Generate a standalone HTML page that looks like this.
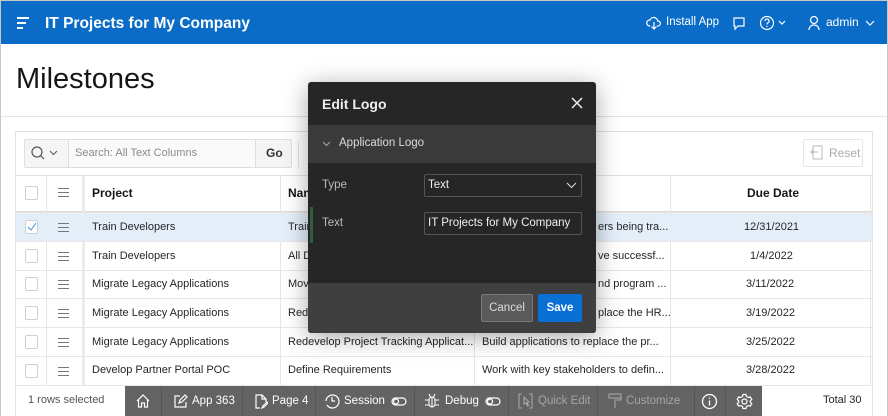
<!DOCTYPE html>
<html><head><meta charset="utf-8"><style>
*{box-sizing:border-box;margin:0;padding:0}
body{width:888px;height:416px;overflow:hidden;font-family:"Liberation Sans",sans-serif;background:#fff;position:relative;color:#262626}
.abs{position:absolute}
.hdr{left:0;top:0;width:888px;height:44px;background:#0a6cc7;color:#fff;border:1px solid #c8c8c8;border-bottom:none}
.t{position:absolute;white-space:nowrap}
.cell{position:absolute;font-size:11px;color:#262626;white-space:nowrap}
.cb{position:absolute;width:13px;height:14px;border:1px solid #cfcfcf;border-radius:2px;background:#fff;left:25px}
.hm{position:absolute;left:58px;width:11px;height:9px;border-top:1.5px solid #777;border-bottom:1.5px solid #777}
.hm:after{content:"";position:absolute;left:0;right:0;top:2.5px;border-top:1.5px solid #777}
.tb{position:absolute;top:386px;height:30px;color:#fff;font-size:11.5px;line-height:30px;border-left:1px solid #555}
</style></head><body>
<div class="abs hdr">
  <div class="abs" style="left:16px;top:16px;width:12px;height:2px;background:#fff"></div>
  <div class="abs" style="left:16px;top:21px;width:9px;height:2px;background:#fff"></div>
  <div class="abs" style="left:16px;top:26px;width:6px;height:2px;background:#fff"></div>
  <div class="t" style="left:44px;top:14px;font-size:15.5px;font-weight:bold">IT Projects for My Company</div>
  <svg class="abs" style="left:645px;top:14px" width="16" height="16" viewBox="0 0 16 16" fill="none" stroke="#fff" stroke-width="1.2"><path d="M4 11H3.5A3 3 0 0 1 4 5a4 4 0 0 1 7.7 1A2.5 2.5 0 0 1 12 11h-1M8 7v7M5.5 11.5 8 14l2.5-2.5"/></svg>
  <div class="t" style="left:665px;top:15px;font-size:11.5px">Install App</div>
  <svg class="abs" style="left:730px;top:14px" width="16" height="16" viewBox="0 0 16 16" fill="none" stroke="#fff" stroke-width="1.2"><path d="M3 3h10v8H7l-3 3v-3H3z"/></svg>
  <svg class="abs" style="left:758px;top:13px" width="30" height="18" viewBox="0 0 30 18" fill="none" stroke="#fff" stroke-width="1.2"><circle cx="8" cy="9" r="6.5"/><path d="M6 7a2 2 0 1 1 2.5 2c-.5.3-.5.7-.5 1.5M8 12v1"/><path d="M20 7l3 3 3-3"/></svg>
  <svg class="abs" style="left:806px;top:13px" width="14" height="18" viewBox="0 0 14 18" fill="none" stroke="#fff" stroke-width="1.2"><circle cx="7" cy="6" r="3.5"/><path d="M2 16c0-3 2-5 5-5s5 2 5 5"/></svg>
  <div class="t" style="left:825px;top:14px;font-size:12px">admin</div>
  <svg class="abs" style="left:864px;top:18px" width="10" height="8" viewBox="0 0 10 8" fill="none" stroke="#fff" stroke-width="1.2"><path d="M1 2l4 4 4-4"/></svg>
</div>
<div class="abs" style="left:0;top:44px;width:1px;height:372px;background:#c8c8c8"></div>
<div class="abs" style="right:0;top:44px;width:1px;height:372px;background:#c8c8c8"></div>
<div class="t" style="left:16px;top:63px;font-size:29px;color:#161616">Milestones</div>
<div class="abs" style="left:1px;top:116px;width:886px;height:1px;background:#e4e4e4"></div>
<div class="abs" style="left:15px;top:131px;width:858px;height:285px;border:1px solid #e2e2e2;border-bottom:none"></div>
<div class="abs" style="left:24px;top:139px;width:268px;height:29px;border:1px solid #dedede;background:#f5f5f5;border-radius:2px"></div>
<div class="abs" style="left:68px;top:140px;width:188px;height:27px;background:#fafafa;border-left:1px solid #dedede;border-right:1px solid #dedede"></div>
<svg class="abs" style="left:30px;top:145px" width="20" height="16" viewBox="0 0 20 16" fill="none" stroke="#555" stroke-width="1.2"><circle cx="7" cy="7" r="5"/><path d="M10.5 10.5 14 14"/></svg>
<svg class="abs" style="left:49px;top:150px" width="10" height="7" viewBox="0 0 10 7" fill="none" stroke="#555"><path d="M1 1l3.5 3.5L8 1"/></svg>
<div class="t" style="left:75px;top:147px;font-size:11px;color:#8a8a8a">Search: All Text Columns</div>
<div class="t" style="left:266px;top:146px;font-size:12px;font-weight:bold;color:#333">Go</div>
<div class="abs" style="left:298px;top:141px;width:1px;height:26px;background:#e2e2e2"></div>
<div class="abs" style="left:803px;top:139px;width:60px;height:28px;border:1px solid #e6e6e6;border-radius:2px"></div>
<svg class="abs" style="left:810px;top:145px" width="14" height="15" viewBox="0 0 14 15" fill="none" stroke="#bbb"><path d="M3 1h9v13H3zM8 7H1M3.5 4.5 1 7l2.5 2.5"/></svg>
<div class="t" style="left:829px;top:146px;font-size:12px;color:#aaa">Reset</div>
<div class="abs" style="left:16px;top:175px;width:856px;height:1px;background:#e2e2e2"></div>
<div class="abs" style="left:16px;top:211px;width:856px;height:3px;background:linear-gradient(#d8d8d8,#f2f2f2)"></div>
<div class="cb" style="top:186px"></div>
<div class="hm" style="top:188px"></div>
<div class="t" style="left:92px;top:186px;font-size:12px;font-weight:bold;color:#161616">Project</div>
<div class="t" style="left:288px;top:186px;font-size:12px;font-weight:bold;color:#161616">Name</div>
<div class="t" style="left:747px;top:186px;font-size:12px;font-weight:bold;color:#161616">Due Date</div>
<div class="abs" style="left:46px;top:176px;width:1px;height:209px;background:#e6e6e6"></div>
<div class="abs" style="left:82px;top:176px;width:3px;height:209px;background:#ececec"></div>
<div class="abs" style="left:280px;top:176px;width:1px;height:209px;background:#e6e6e6"></div>
<div class="abs" style="left:474px;top:176px;width:1px;height:209px;background:#e6e6e6"></div>
<div class="abs" style="left:670px;top:176px;width:1px;height:209px;background:#e6e6e6"></div>
<div class="abs" style="left:870px;top:176px;width:1px;height:209px;background:#e6e6e6"></div>
<div class="abs" style="left:16px;top:214px;width:856px;height:27px;background:#e3eef9"></div>
<div class="abs" style="left:16px;top:241px;width:856px;height:1px;background:#e6e6e6"></div>
<div class="abs" style="left:16px;top:270px;width:856px;height:1px;background:#e6e6e6"></div>
<div class="abs" style="left:16px;top:298px;width:856px;height:1px;background:#e6e6e6"></div>
<div class="abs" style="left:16px;top:327px;width:856px;height:1px;background:#e6e6e6"></div>
<div class="abs" style="left:16px;top:356px;width:856px;height:1px;background:#e6e6e6"></div>
<div class="abs" style="left:16px;top:385px;width:856px;height:1px;background:#e6e6e6"></div>
<div class="cb" style="top:220px"></div><svg class="abs" style="left:27px;top:222px" width="10" height="10" viewBox="0 0 10 10" fill="none" stroke="#4a90d9"><path d="M1 5l3 3 5-7"/></svg>
<div class="cb" style="top:249px"></div><div class="cb" style="top:277px"></div><div class="cb" style="top:306px"></div><div class="cb" style="top:335px"></div><div class="cb" style="top:364px"></div>
<div class="hm" style="top:223px"></div><div class="hm" style="top:252px"></div><div class="hm" style="top:280px"></div><div class="hm" style="top:309px"></div><div class="hm" style="top:338px"></div><div class="hm" style="top:367px"></div>
<div class="cell" style="left:92px;top:221px">Train Developers</div>
<div class="cell" style="left:92px;top:250px">Train Developers</div>
<div class="cell" style="left:92px;top:278px">Migrate Legacy Applications</div>
<div class="cell" style="left:92px;top:307px">Migrate Legacy Applications</div>
<div class="cell" style="left:92px;top:336px">Migrate Legacy Applications</div>
<div class="cell" style="left:92px;top:364px">Develop Partner Portal POC</div>
<div class="cell" style="left:288px;top:221px">Train</div>
<div class="cell" style="left:288px;top:250px">All D</div>
<div class="cell" style="left:288px;top:278px">Mov</div>
<div class="cell" style="left:288px;top:307px">Rede</div>
<div class="cell" style="left:288px;top:336px">Redevelop Project Tracking Applicat...</div>
<div class="cell" style="left:288px;top:364px">Define Requirements</div>
<div class="cell" style="left:598px;top:221px">ers being tra...</div>
<div class="cell" style="left:598px;top:250px">ve successf...</div>
<div class="cell" style="left:598px;top:278px">nd program ...</div>
<div class="cell" style="left:598px;top:307px">place the HR...</div>
<div class="cell" style="left:482px;top:336px">Build applications to replace the pr...</div>
<div class="cell" style="left:482px;top:364px">Work with key stakeholders to defin...</div>
<div class="cell" style="left:744px;top:221px">12/31/2021</div>
<div class="cell" style="left:750px;top:250px">1/4/2022</div>
<div class="cell" style="left:746px;top:278px">3/11/2022</div>
<div class="cell" style="left:746px;top:307px">3/19/2022</div>
<div class="cell" style="left:746px;top:336px">3/25/2022</div>
<div class="cell" style="left:746px;top:364px">3/28/2022</div>
<div class="cell" style="left:28px;top:394px;font-size:11px;color:#555">1 rows selected</div>
<div class="cell" style="left:823px;top:394px;font-size:11px">Total 30</div>
<div class="abs" style="left:125px;top:386px;width:637px;height:30px;background:#636363"></div>
<div class="tb" style="left:125px;width:36px;border:none"><svg style="position:absolute;left:10px;top:7px" width="16" height="16" viewBox="0 0 16 16" fill="none" stroke="#fff" stroke-width="1.2"><path d="M2 8 8 2l6 6M3.5 6.5V14h3v-4h3v4h3V6.5"/></svg></div>
<div class="tb" style="left:161px;width:81px"><svg style="position:absolute;left:11px;top:8px" width="15" height="15" viewBox="0 0 15 15" fill="none" stroke="#fff" stroke-width="1.2"><path d="M7 2H2v11h11V8M6 9l1-3 5-5 2 2-5 5z"/></svg><span style="position:absolute;left:30px">App 363</span></div>
<div class="tb" style="left:242px;width:73px"><svg style="position:absolute;left:11px;top:8px" width="14" height="15" viewBox="0 0 14 15" fill="none" stroke="#fff" stroke-width="1.2"><path d="M6 14H2V1h6l4 4v3M8 1v4h4M8 14l1-2 4-4 1 1-4 4z"/></svg><span style="position:absolute;left:29px">Page 4</span></div>
<div class="tb" style="left:315px;width:99px"><svg style="position:absolute;left:8px;top:7px" width="16" height="16" viewBox="0 0 16 16" fill="none" stroke="#fff" stroke-width="1.2"><path d="M3 12a6.5 6.5 0 1 0-1-4M8 4v4h3"/></svg><span style="position:absolute;left:28px">Session</span><svg style="position:absolute;left:75px;top:11px" width="16" height="9" viewBox="0 0 16 9" fill="none" stroke="#fff" stroke-width="1.2"><rect x="1" y="1" width="14" height="7" rx="3.5"/><circle cx="5" cy="4.5" r="2.5"/></svg></div>
<div class="tb" style="left:414px;width:94px"><svg style="position:absolute;left:9px;top:7px" width="16" height="16" viewBox="0 0 16 16" fill="none" stroke="#fff" stroke-width="1.1"><rect x="5" y="4" width="6" height="10" rx="3"/><path d="M5 1l1.5 3M11 1 9.5 4M1 7h4M11 7h4M1 12h4M11 12h4M8 4v10"/></svg><span style="position:absolute;left:30px">Debug</span><svg style="position:absolute;left:70px;top:11px" width="16" height="9" viewBox="0 0 16 9" fill="none" stroke="#fff" stroke-width="1.2"><rect x="1" y="1" width="14" height="7" rx="3.5"/><circle cx="5" cy="4.5" r="2.5"/></svg></div>
<div class="tb" style="left:508px;width:89px;color:#a5a5a5"><svg style="position:absolute;left:9px;top:7px" width="15" height="16" viewBox="0 0 15 16" fill="none" stroke="#a5a5a5" stroke-width="1.1"><path d="M4 1H1v14h3M11 1h3v14h-3M6 4l5 5-2 .5 1.5 3-1 .5-1.5-3L6 11z"/></svg><span style="position:absolute;left:29px">Quick Edit</span></div>
<div class="tb" style="left:597px;width:97px;color:#a5a5a5"><svg style="position:absolute;left:10px;top:7px" width="14" height="16" viewBox="0 0 14 16" fill="none" stroke="#a5a5a5" stroke-width="1.1"><rect x="1" y="1" width="12" height="4"/><path d="M13 3v4H7v8"/></svg><span style="position:absolute;left:28px">Customize</span></div>
<div class="tb" style="left:694px;width:31px"><svg style="position:absolute;left:6px;top:7px" width="17" height="17" viewBox="0 0 17 17" fill="none" stroke="#fff" stroke-width="1.3"><circle cx="8.5" cy="8.5" r="7"/><path d="M8.5 7.5v5M8.5 4.5v1.2"/></svg></div>
<div class="tb" style="left:725px;width:37px"><svg style="position:absolute;left:10px;top:7px" width="17" height="17" viewBox="0 0 17 17" fill="none" stroke="#fff" stroke-width="1.2"><circle cx="8.5" cy="8.5" r="2.5"/><path d="M7 1.5h3l.5 2 1.8 1 2-.7 1.5 2.6-1.5 1.4v1.4l1.5 1.4-1.5 2.6-2-.7-1.8 1-.5 2H7l-.5-2-1.8-1-2 .7-1.5-2.6 1.5-1.4V7.8L1.2 6.4l1.5-2.6 2 .7 1.8-1z"/></svg></div>
<div class="abs" style="left:308px;top:82px;width:288px;height:251px;background:#262626;border-radius:3px;box-shadow:0 4px 24px rgba(0,0,0,.35);overflow:hidden">
  <div class="t" style="left:14px;top:14px;font-size:14px;font-weight:bold;color:#eee">Edit Logo</div>
  <svg class="abs" style="left:263px;top:15px" width="12" height="12" viewBox="0 0 12 12" stroke="#eee" stroke-width="1.5"><path d="M1 1l10 10M11 1 1 11"/></svg>
  <div class="abs" style="left:0;top:43px;width:288px;height:38px;background:#3a3a3a"></div>
  <svg class="abs" style="left:14px;top:59px" width="9" height="6" viewBox="0 0 9 6" fill="none" stroke="#aaa"><path d="M1 1l3.5 3.5L8 1"/></svg>
  <div class="t" style="left:31px;top:55px;font-size:11.5px;color:#dcdcdc">Application Logo</div>
  <div class="t" style="left:14px;top:97px;font-size:11.5px;color:#bbb">Type</div>
  <div class="abs" style="left:116px;top:92px;width:158px;height:23px;border:1px solid #555;border-radius:2px;background:#262626"></div>
  <div class="t" style="left:120px;top:97px;font-size:11.5px;color:#eee">Text</div>
  <svg class="abs" style="left:258px;top:100px" width="11" height="7" viewBox="0 0 11 7" fill="none" stroke="#ddd"><path d="M1 1l4.5 4.5L10 1"/></svg>
  <div class="abs" style="left:2px;top:125px;width:3px;height:36px;background:#2f5d3e"></div>
  <div class="t" style="left:14px;top:135px;font-size:11.5px;color:#bbb">Text</div>
  <div class="abs" style="left:116px;top:130px;width:158px;height:23px;border:1px solid #555;border-radius:2px"></div>
  <div class="t" style="left:120px;top:135px;font-size:11.5px;color:#eee">IT Projects for My Company</div>
  <div class="abs" style="left:0;top:201px;width:288px;height:50px;background:#3f3f3f"></div>
  <div class="abs" style="left:173px;top:212px;width:52px;height:28px;background:#5a5a5a;border:1px solid #777;border-radius:2px;color:#ddd;font-size:11.5px;text-align:center;line-height:26px">Cancel</div>
  <div class="abs" style="left:230px;top:212px;width:44px;height:28px;background:#0a70d6;border-radius:2px;color:#fff;font-size:11.5px;font-weight:bold;text-align:center;line-height:28px">Save</div>
</div>
</body></html>
